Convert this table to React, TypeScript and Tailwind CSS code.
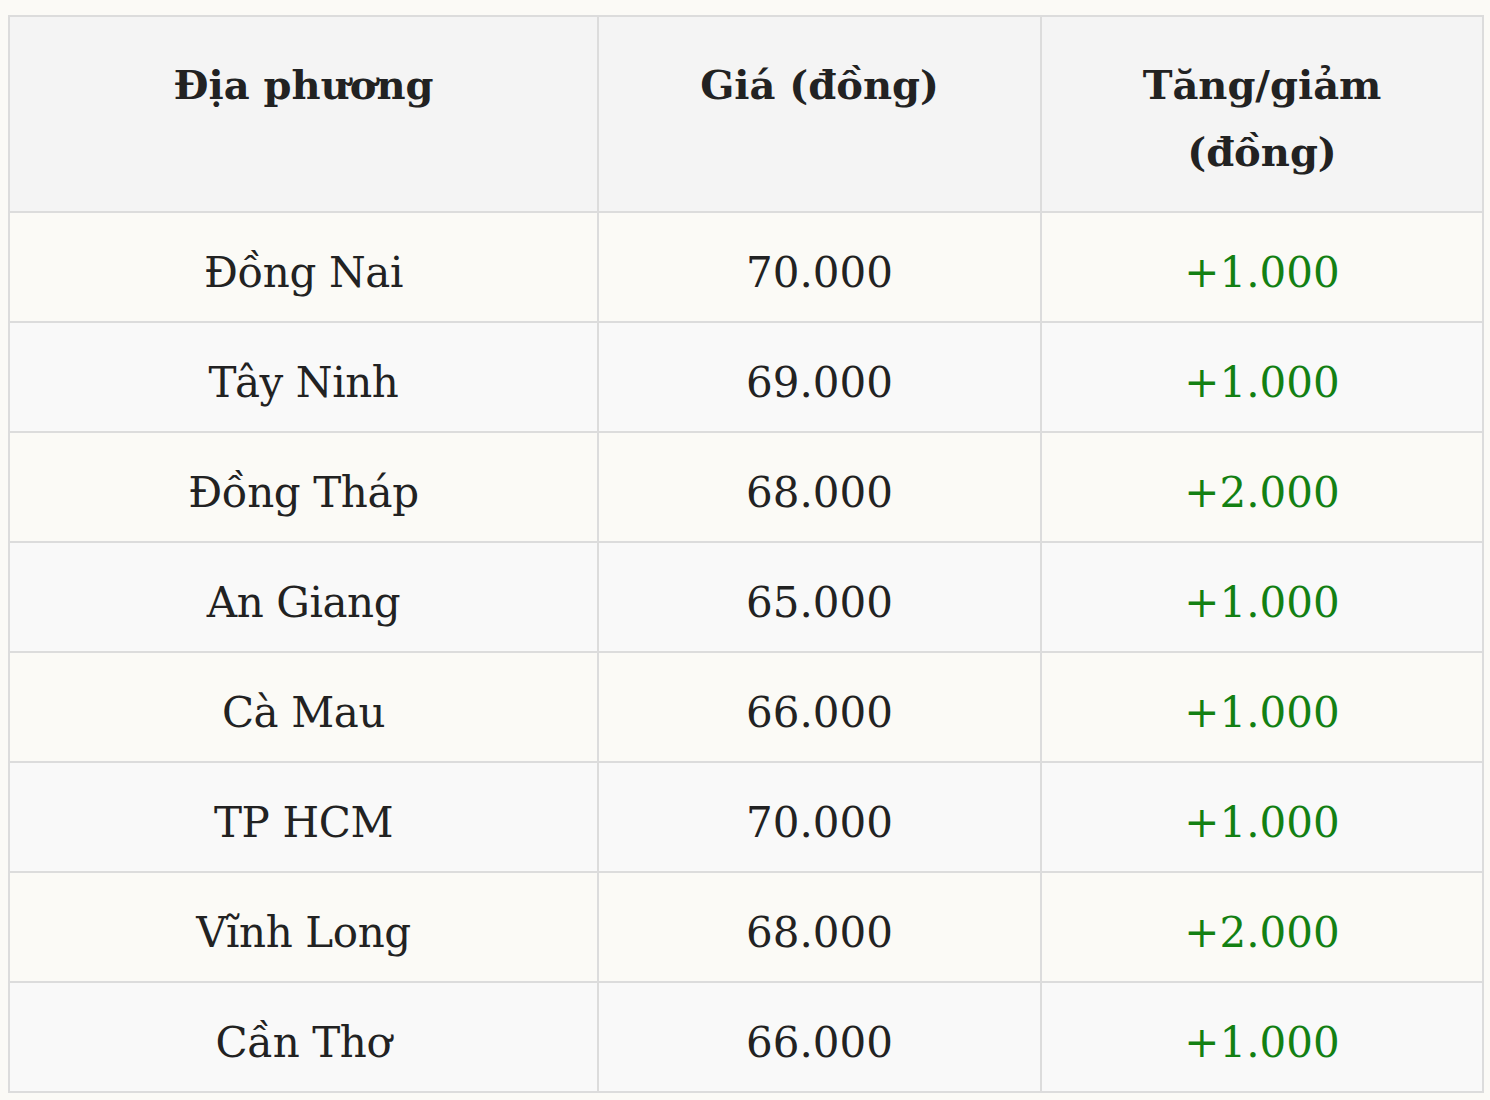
import React from "react";

const rows: [string, string, string][] = [
  ["Đồng Nai", "70.000", "+1.000"],
  ["Tây Ninh", "69.000", "+1.000"],
  ["Đồng Tháp", "68.000", "+2.000"],
  ["An Giang", "65.000", "+1.000"],
  ["Cà Mau", "66.000", "+1.000"],
  ["TP HCM", "70.000", "+1.000"],
  ["Vĩnh Long", "68.000", "+2.000"],
  ["Cần Thơ", "66.000", "+1.000"],
];

export default function App() {
  return (
    <div className="min-h-[1100px] bg-[#fbfaf6] pt-[15px] pl-[8px] font-['DejaVu_Serif',serif] text-[#222222]">
      <table className="w-[1474px] table-fixed border-collapse border-2 border-[#dcdcdc]">
        <colgroup>
          <col className="w-[589px]" />
          <col className="w-[443px]" />
          <col className="w-[442px]" />
        </colgroup>
        <thead>
          <tr className="bg-[#f4f4f4]">
            {["Địa phương", "Giá (đồng)", "Tăng/giảm (đồng)"].map((h) => (
              <th
                key={h}
                className="border-2 border-[#dcdcdc] px-[60px] pt-[34px] pb-[26px] align-top text-center text-[40px] leading-[67px] font-bold"
              >
                {h}
              </th>
            ))}
          </tr>
        </thead>
        <tbody>
          {rows.map((r, i) => (
            <tr key={i} className={i % 2 === 0 ? "bg-[#fbfaf6]" : "bg-[#f9f9f9]"}>
              <td className="border-2 border-[#dcdcdc] pt-[26px] pb-[15px] text-center text-[42px] leading-[67px] tracking-[-0.4px]">
                {r[0]}
              </td>
              <td className="border-2 border-[#dcdcdc] pt-[26px] pb-[15px] text-center text-[42px] leading-[67px]">
                {r[1]}
              </td>
              <td className="border-2 border-[#dcdcdc] pt-[26px] pb-[15px] text-center text-[42px] leading-[67px] text-[#138013]">
                {r[2]}
              </td>
            </tr>
          ))}
        </tbody>
      </table>
    </div>
  );
}
